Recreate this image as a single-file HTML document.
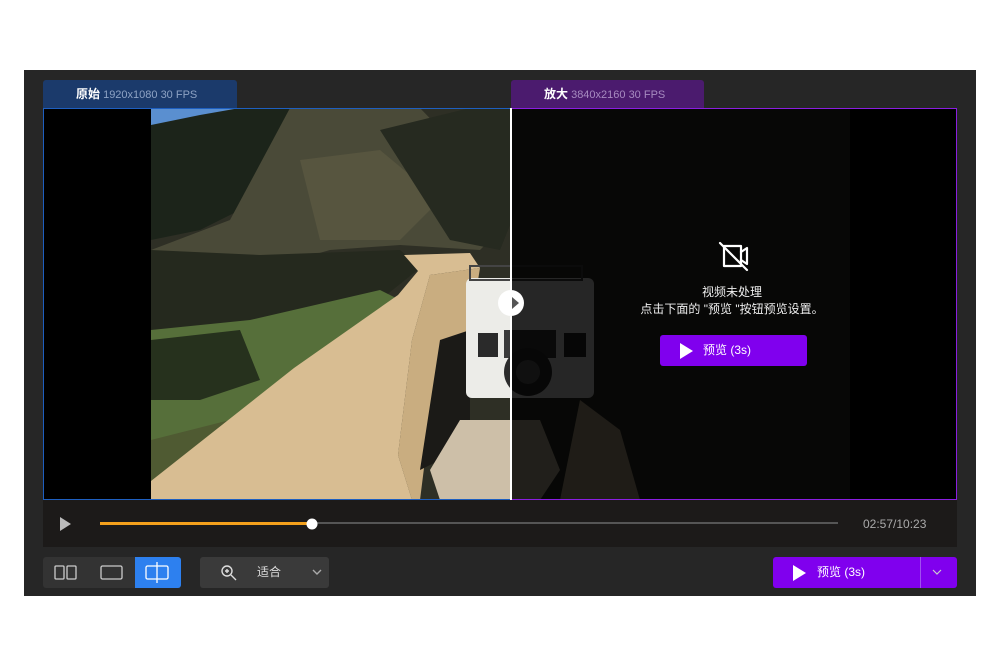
<!DOCTYPE html>
<html><head><meta charset="utf-8"><style>
*{margin:0;padding:0;box-sizing:border-box}
body{width:1000px;height:666px;background:#fff;position:relative;overflow:hidden;font-family:"Liberation Sans","Noto Sans CJK SC",sans-serif}
.a{position:absolute}
</style></head><body>
<div class="a" style="left:24px;top:70px;width:952px;height:526px;background:#262626"></div>
<div class="a" style="left:43px;top:80px;width:194px;height:28px;background:#1b3a6b;border-radius:3px 3px 0 0;color:#8ea3c4;font-size:11px;line-height:28px;padding-left:33px"><b style="color:#fff;font-size:12px">原始</b> 1920x1080 30 FPS</div>
<div class="a" style="left:511px;top:80px;width:193px;height:28px;background:#4b1b6e;border-radius:3px 3px 0 0;color:#a78bc0;font-size:11px;line-height:28px;padding-left:33px"><b style="color:#fff;font-size:12px">放大</b> 3840x2160 30 FPS</div>
<svg class="a" style="left:0;top:0" width="1000" height="666">
<defs>
<clipPath id="L"><rect x="151" y="108" width="360" height="392"/></clipPath>
<clipPath id="R"><rect x="511" y="108" width="339" height="392"/></clipPath>
<g id="scene">
<rect x="151" y="108" width="700" height="392" fill="#2e2f25"/>
<polygon points="151,108 270,108 255,150 235,180 151,180" fill="#5a8fd0"/>
<polygon points="151,125 200,115 240,108 290,108 300,150 260,200 200,230 151,240" fill="#1c241a"/>
<polygon points="290,108 420,108 470,160 500,230 480,250 400,245 330,250 260,270 200,280 151,270 151,250 230,220" fill="#4a4a38"/>
<polygon points="300,160 380,150 440,200 400,240 320,240" fill="#57553f"/>
<polygon points="380,130 470,108 511,108 520,200 500,250 450,240" fill="#262a20"/>
<polygon points="151,250 260,255 400,250 420,268 380,300 300,330 151,340" fill="#25291e"/>
<polygon points="151,330 250,320 380,290 400,300 330,360 260,420 151,450" fill="#566f3a"/>
<polygon points="151,340 240,330 260,380 200,400 151,400" fill="#26311d"/>
<polygon points="151,440 230,420 200,500 151,500" fill="#4f5a32"/>
<polygon points="404,255 470,253 480,268 430,275 412,340 398,455 412,500 151,500 151,481 294,368 398,295 418,271" fill="#d8bd92"/>
<polygon points="430,275 480,268 470,330 430,420 420,500 412,500 398,455 412,340" fill="#c9ad80"/>
<polygon points="440,340 470,330 470,420 480,460 440,460 420,470" fill="#1b1a17"/>
<polygon points="460,420 540,420 560,470 540,500 440,500 430,470" fill="#cdbfa8"/>
<rect x="466" y="278" width="128" height="120" rx="6" fill="#ecece8"/>
<rect x="470" y="266" width="112" height="14" fill="none" stroke="#444" stroke-width="2"/>
<rect x="478" y="333" width="20" height="24" fill="#2a2a2a"/>
<rect x="564" y="333" width="22" height="24" fill="#2a2a2a"/>
<rect x="504" y="330" width="52" height="28" fill="#3a3a3a"/>
<circle cx="528" cy="372" r="24" fill="#2b2b2b"/>
<circle cx="528" cy="372" r="12" fill="#666"/>
<polygon points="580,400 620,430 640,500 560,500" fill="#bfae92"/>
</g>
</defs>
<rect x="43" y="108" width="914" height="392" fill="#000"/>
<g clip-path="url(#L)"><use href="#scene"/></g>
<g clip-path="url(#R)"><use href="#scene"/><rect x="511" y="108" width="339" height="392" fill="#000" opacity="0.84"/></g>
<rect x="43.5" y="108.5" width="468" height="391" fill="none" stroke="#1e5fc0"/>
<rect x="511.5" y="108.5" width="445" height="391" fill="none" stroke="#8a1ee0"/>
<rect x="510" y="108" width="2" height="392" fill="#fff"/>
<circle cx="511" cy="303" r="13" fill="#fff"/>
<polygon points="512,297 519,303 512,309" fill="#555"/>
<g stroke="#fff" stroke-width="2.2" fill="none" stroke-linecap="round" stroke-linejoin="round">
<path d="M724 246h17v20h-17z" /><path d="M741 252l6-4v16l-6-4"/><path d="M720 243l27 27"/>
</g>
<rect x="43" y="500" width="914" height="47" fill="#1c1a19"/>
<polygon points="60,517 71,524 60,531" fill="#bbb"/>
<rect x="100" y="522" width="738" height="2" fill="#555"/>
<rect x="100" y="522" width="212" height="3" fill="#f3a01c"/>
<circle cx="312" cy="524" r="5.5" fill="#fff"/>
</svg>
<div class="a" style="left:612px;top:284px;width:240px;text-align:center;color:#eee;font-size:12px;line-height:17px">视频未处理<br>点击下面的 "预览 "按钮预览设置。</div>
<div class="a" style="left:660px;top:335px;width:147px;height:31px;background:#8000ee;border-radius:3px;color:#fff;font-size:12px;line-height:31px;padding-left:43px">预览 (3s)</div>
<svg class="a" style="left:680px;top:343px" width="14" height="16"><polygon points="0,0 13,8 0,16" fill="#fff"/></svg>
<div class="a" style="left:863px;top:517px;color:#aaa;font-size:12px">02:57/10:23</div>
<div class="a" style="left:43px;top:557px;width:138px;height:31px;background:#333;border-radius:3px"></div>
<div class="a" style="left:135px;top:557px;width:46px;height:31px;background:#2d80ef;border-radius:0 3px 3px 0"></div>
<svg class="a" style="left:43px;top:557px" width="140" height="31" fill="none" stroke="#ccc" stroke-width="1.3">
<rect x="12" y="9" width="9" height="13" rx="1"/><rect x="24" y="9" width="9" height="13" rx="1"/>
<rect x="58" y="9" width="21" height="13" rx="1.5"/>
<rect x="103" y="9" width="22" height="13" rx="1.5" stroke="#fff"/><path d="M114 5v21" stroke="#fff"/>
</svg>
<div class="a" style="left:200px;top:557px;width:129px;height:31px;background:#3a3a3a;border-radius:3px;color:#ddd;font-size:12px;line-height:31px;padding-left:57px">适合</div>
<svg class="a" style="left:200px;top:557px" width="129" height="31" fill="none" stroke="#ddd" stroke-width="1.4">
<circle cx="27" cy="14" r="5"/><path d="M31 18l5 5M25 14h4M27 12v4"/><path d="M113 13l4 4 4-4" stroke="#aaa"/>
</svg>
<div class="a" style="left:773px;top:557px;width:184px;height:31px;background:#8000ee;border-radius:3px;color:#fff;font-size:12px;line-height:31px;padding-left:44px">预览 (3s)</div>
<div class="a" style="left:920px;top:557px;width:1px;height:31px;background:#a050f0"></div>
<svg class="a" style="left:793px;top:565px" width="14" height="16"><polygon points="0,0 13,8 0,16" fill="#fff"/></svg>
<svg class="a" style="left:930px;top:567px" width="14" height="10"><path d="M3 3l4 4 4-4" stroke="#ccc" fill="none" stroke-width="1.2"/></svg>
</body></html>
